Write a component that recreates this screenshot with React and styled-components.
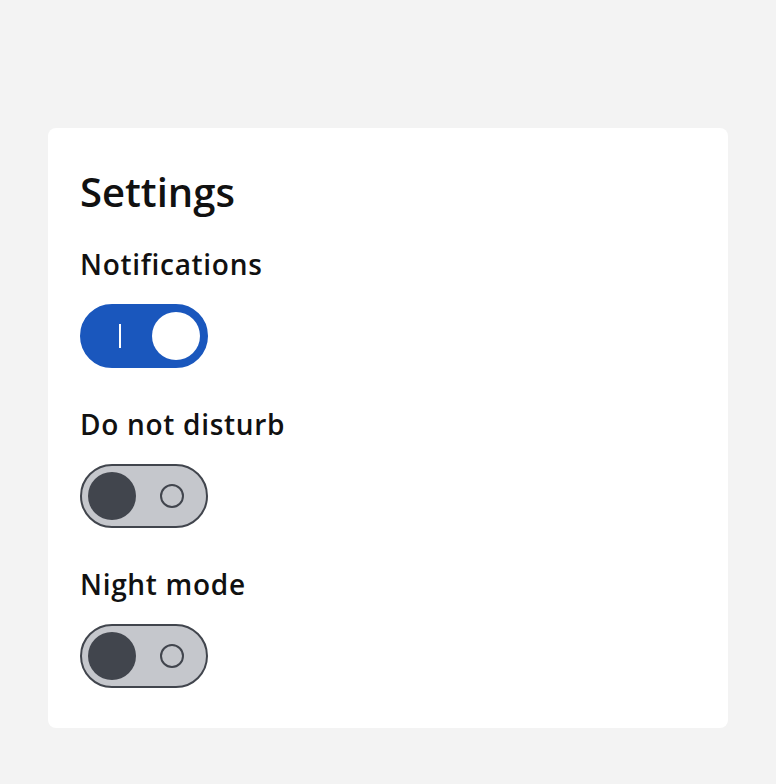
import React, { useState } from 'react';
import styled, { createGlobalStyle } from 'styled-components';

const GlobalStyle = createGlobalStyle`
  html, body {
    margin: 0;
    padding: 0;
    background: #f3f3f3;
  }
  body {
    font-family: "Open Sans", "Noto Sans", sans-serif;
    color: #111;
  }
`;

const Page = styled.div`
  padding: 128px 48px 56px 48px;
`;

const Card = styled.div`
  background: #fff;
  border-radius: 8px;
  padding: 40px 32px 40px 32px;
  display: flex;
  flex-direction: column;
`;

const Title = styled.h1`
  margin: 0 0 30px 0;
  font-size: 40px;
  line-height: 48px;
  font-weight: 600;
  letter-spacing: 0;
`;

const Section = styled.div`
  display: flex;
  flex-direction: column;
  align-items: flex-start;
  & + & {
    margin-top: 38px;
  }
`;

const Label = styled.label`
  font-size: 28px;
  line-height: 36px;
  font-weight: 600;
  letter-spacing: 0.7px;
  margin-bottom: 22px;
`;

const Track = styled.button`
  position: relative;
  width: 128px;
  height: 64px;
  border-radius: 32px;
  padding: 0;
  cursor: pointer;
  box-sizing: border-box;
  border: 2px solid ${p => (p.$on ? '#1a57bd' : '#41454d')};
  background: ${p => (p.$on ? '#1a57bd' : '#c5c7cc')};
`;

const Thumb = styled.span`
  position: absolute;
  top: 6px;
  left: ${p => (p.$on ? '70px' : '6px')};
  width: 48px;
  height: 48px;
  border-radius: 50%;
  background: ${p => (p.$on ? '#fff' : '#41454d')};
`;

const OnMark = styled.span`
  position: absolute;
  left: 37px;
  top: 18px;
  width: 2px;
  height: 24px;
  background: #fff;
`;

const OffMark = styled.span`
  position: absolute;
  left: 78px;
  top: 18px;
  width: 24px;
  height: 24px;
  box-sizing: border-box;
  border-radius: 50%;
  border: 2px solid #41454d;
`;

function Toggle({ on, onChange, label }) {
  return (
    <Track $on={on} role="switch" aria-checked={on} aria-label={label} onClick={onChange}>
      {on ? <OnMark /> : <OffMark />}
      <Thumb $on={on} />
    </Track>
  );
}

export default function App() {
  const [settings, setSettings] = useState({
    notifications: true,
    dnd: false,
    night: false,
  });
  const flip = key => () => setSettings(s => ({ ...s, [key]: !s[key] }));

  const items = [
    { key: 'notifications', label: 'Notifications' },
    { key: 'dnd', label: 'Do not disturb' },
    { key: 'night', label: 'Night mode' },
  ];

  return (
    <Page>
      <GlobalStyle />
      <Card>
        <Title>Settings</Title>
        {items.map(it => (
          <Section key={it.key}>
            <Label>{it.label}</Label>
            <Toggle on={settings[it.key]} onChange={flip(it.key)} label={it.label} />
          </Section>
        ))}
      </Card>
    </Page>
  );
}
